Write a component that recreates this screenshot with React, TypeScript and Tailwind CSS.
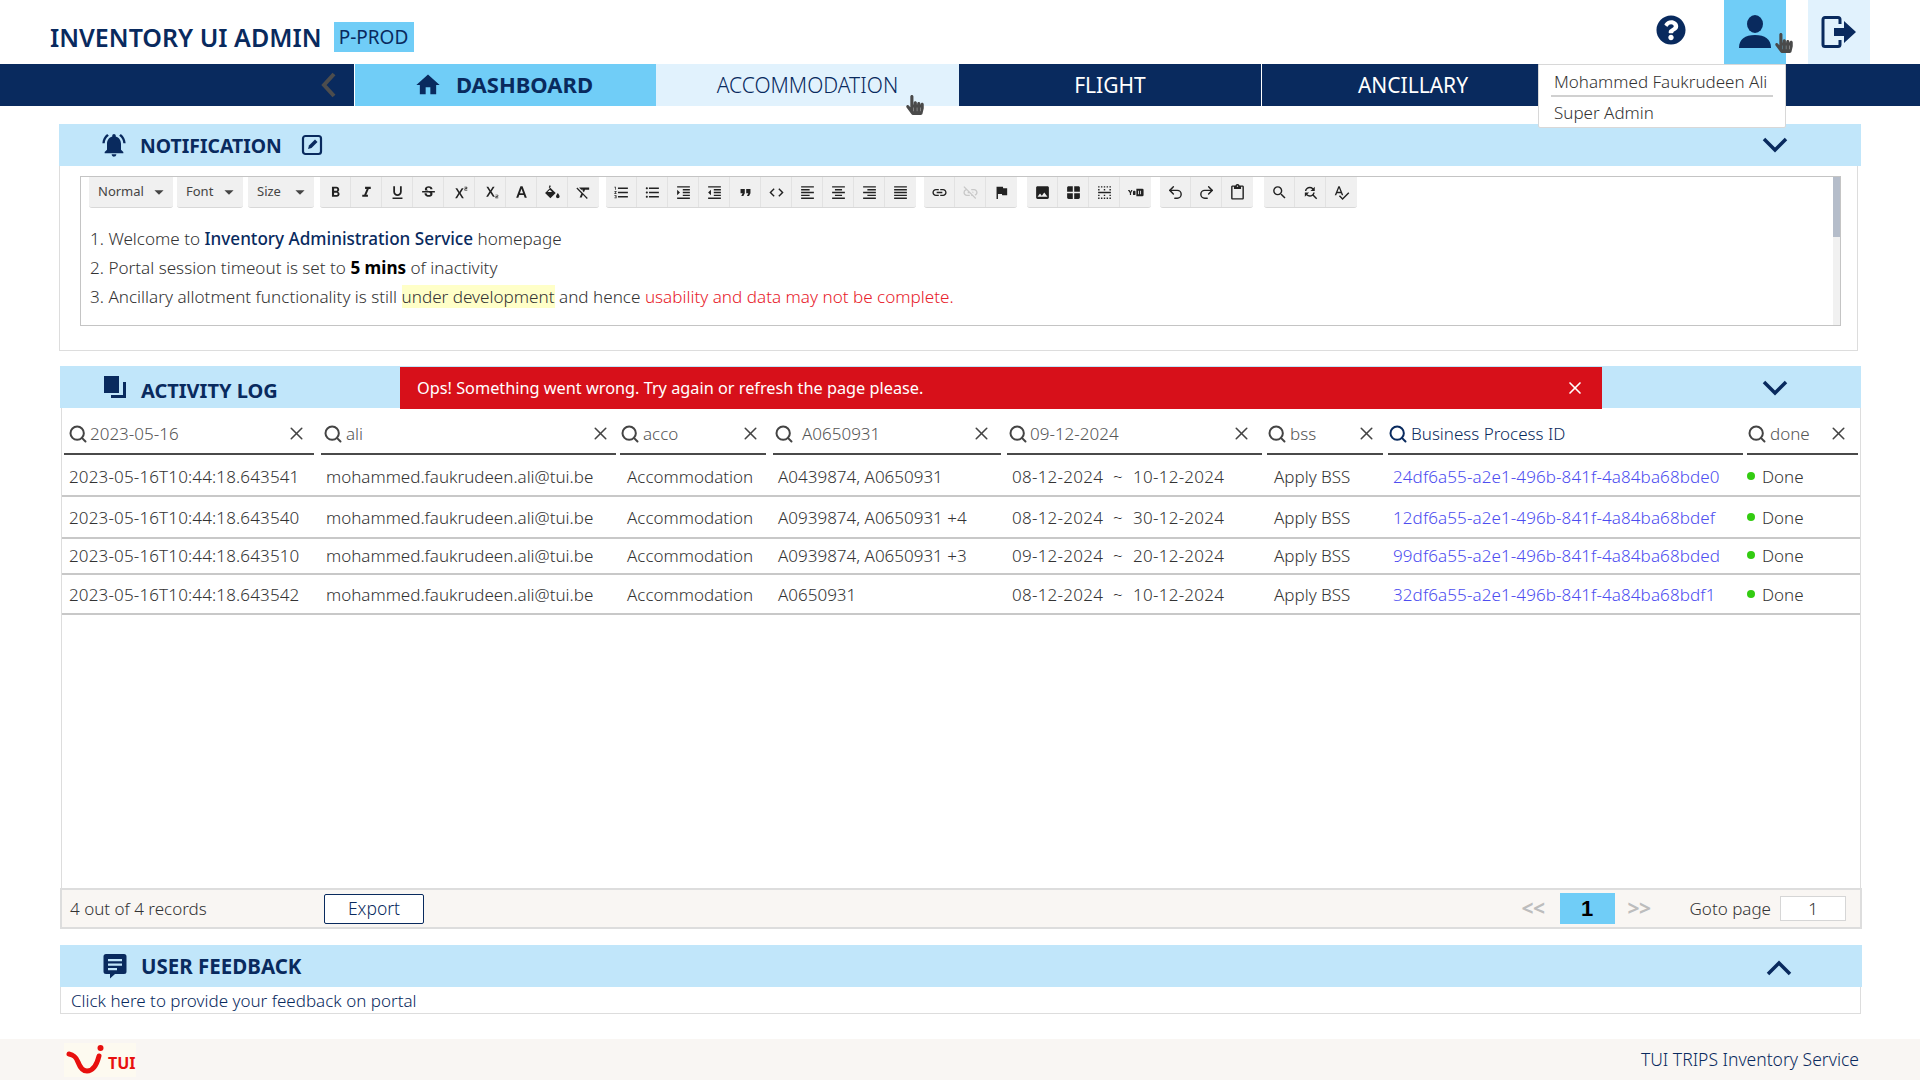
import { Search, X, Undo2, Redo2 } from "lucide-react"
import type { ReactNode } from "react"
import {
  MdCode, MdBorderHorizontal, MdContentPaste, MdFindReplace, MdFlag, MdFormatAlignCenter, MdFormatAlignJustify,
  MdFormatAlignLeft, MdFormatAlignRight, MdFormatBold, MdFormatClear, MdFormatIndentDecrease,
  MdFormatIndentIncrease, MdFormatItalic, MdFormatListBulleted, MdFormatListNumbered, MdFormatQuote,
  MdFormatUnderlined, MdHome, MdImage, MdLink, MdLinkOff, MdNotificationsActive, MdSearch,
  MdSpellcheck, MdStrikethroughS, MdSubscript, MdSuperscript, MdWindow, MdArrowDropDown,
} from "react-icons/md"
import { FaHandPointer, FaQuestionCircle } from "react-icons/fa"

const rows = [
  { h: "h-[42px] pt-[4px]", time: "2023-05-16T10:44:18.643541", codes: "A0439874, A0650931", from: "08-12-2024", to: "10-12-2024", id: "24df6a55-a2e1-496b-841f-4a84ba68bde0" },
  { h: "h-[42px] pt-[1px]", time: "2023-05-16T10:44:18.643540", codes: "A0939874, A0650931 +4", from: "08-12-2024", to: "30-12-2024", id: "12df6a55-a2e1-496b-841f-4a84ba68bdef" },
  { h: "h-[36px]", time: "2023-05-16T10:44:18.643510", codes: "A0939874, A0650931 +3", from: "09-12-2024", to: "20-12-2024", id: "99df6a55-a2e1-496b-841f-4a84ba68bded" },
  { h: "h-[40px] pt-[2px]", time: "2023-05-16T10:44:18.643542", codes: "A0650931", from: "08-12-2024", to: "10-12-2024", id: "32df6a55-a2e1-496b-841f-4a84ba68bdf1" },
]

const filters = [
  { box: "w-[257px] pr-[7px]", inner: "pl-[4px] pr-[7px] gap-[2px]", value: "2023-05-16" },
  { box: "w-[301px] pr-[6px]", inner: "pl-[2px] pr-[5px] gap-[3px]", value: "ali" },
  { box: "w-[151px] pr-[7px]", inner: "-ml-[2px] pr-[5px] gap-[3px]", value: "acco" },
  { box: "w-[234px] pr-[6px]", inner: "pl-[1px] pr-[9px] gap-[8px]", value: "A0650931" },
  { box: "w-[261px] pr-[6px]", inner: "pl-[1px] pr-[10px] gap-[2px]", value: "09-12-2024" },
  { box: "w-[120px] pr-[5px]", inner: "-ml-[1px] pr-[6px] gap-[3px]", value: "bss" },
  { box: "w-[360px] pr-[5px]", inner: "pr-[9px] gap-[3px]", value: "Business Process ID", active: true },
  { box: "w-[110px]", inner: "-ml-[1px] pr-[9px] gap-[3px]", value: "done" },
]

function FontColorIcon({ size = 16 }: { size?: number }) {
  return (
    <svg width={size} height={size} viewBox="0 0 16 16" fill="#222">
      <path fillRule="evenodd" d="M7 2h2l4 11h-2l-.9-2.700H5.900L5 13H3zm1 2.400L6.500 8.700h3z" />
    </svg>
  )
}

function FillIcon({ size = 16 }: { size?: number }) {
  return (
    <svg width={size} height={size} viewBox="0 0 16 16" fill="#222">
      <path fillRule="evenodd" d="M5.500 1l1 1-1 1 5.500 5.500-5 5L1 8.500l4.500-4.500-1-1zm0 4.400L3.400 7.500h4.200z" />
      <path d="M13 8.500c1 1.500 1.700 2.400 1.700 3.200a1.700 1.700 0 0 1-3.400 0c0-.8.700-1.700 1.700-3.200z" />
    </svg>
  )
}

function VideoIcon({ size = 16 }: { size?: number }) {
  return (
    <svg width={size} height={size} viewBox="0 0 20 20" fill="#222">
      <path d="M1 7h2l1 2 1-2h1.500L4.800 10.500V13H3.400v-2.500z" />
      <rect x="7" y="8" width="3" height="5" rx="1" />
      <path fillRule="evenodd" d="M11 5.500h7a1.500 1.500 0 0 1 1.500 1.500v6a1.500 1.500 0 0 1-1.500 1.500h-7zM13 8v4h1V8zm2.500 0v4h1V8z" />
    </svg>
  )
}

const toolbarGroups = [
  [MdFormatBold, MdFormatItalic, MdFormatUnderlined, MdStrikethroughS, MdSuperscript, MdSubscript, FontColorIcon, FillIcon, MdFormatClear],
  [MdFormatListNumbered, MdFormatListBulleted, MdFormatIndentIncrease, MdFormatIndentDecrease, MdFormatQuote, MdCode, MdFormatAlignLeft, MdFormatAlignCenter, MdFormatAlignRight, MdFormatAlignJustify],
  [MdLink, MdLinkOff, MdFlag],
  [MdImage, MdWindow, MdBorderHorizontal, VideoIcon],
  [Undo2, Redo2, MdContentPaste],
  [MdSearch, MdFindReplace, MdSpellcheck],
]

function Chevron({ up = false }: { up?: boolean }) {
  return (
    <svg width="26" height="16" viewBox="0 0 26 16" fill="none" stroke="#092a5e" strokeWidth="3.500">
      <path d={up ? "M2 14 L13 3 L24 14" : "M2 2 L13 13 L24 2"} />
    </svg>
  )
}

function SectionBar({ icon, title, titleClass, children }: { icon: ReactNode; title: string; titleClass?: string; children?: ReactNode }) {
  return (
    <div className="flex h-[42px] items-center bg-[#c1e6fa]">
      <div className="flex w-[340px] shrink-0 items-center">
        <span className="ml-[41px] flex w-[28px] justify-center">{icon}</span>
        <span className={`ml-[12px] font-bold text-[#092a5e] ${titleClass}`}>{title}</span>
      </div>
      {children}
    </div>
  )
}

function NavTab({ label, tone }: { label: string; tone: "hover" | "off" }) {
  const toneClass =
    tone === "hover"
      ? "bg-[#e1f2fd] text-[#092a5e] font-light"
      : "border-r border-white text-white font-normal"
  return <div className={`flex h-full w-[303px] items-center justify-center pt-[1px] text-[21px] ${toneClass}`}>{label}</div>
}

function Dropdown({ w, label }: { w: string; label: string }) {
  return (
    <div className={`flex h-[31px] items-center justify-between rounded-b-[3px] border-b border-[#d8d8d8] bg-[#f0f0f0] pl-[9px] pr-[3px] ${w}`}>
      <span>{label}</span>
      <MdArrowDropDown size={22} />
    </div>
  )
}

export default function App() {
  return (
    <div className="relative flex h-[1080px] w-[1920px] flex-col overflow-hidden bg-white font-['Noto_Sans',sans-serif] text-[#333]">
      {/* top bar */}
      <header className="flex h-[64px] shrink-0 items-center">
        <div className="flex items-center pt-[10px]">
          <h1 className="ml-[50px] text-[25px] font-semibold leading-none text-[#092a5e]">INVENTORY UI ADMIN</h1>
          <span className="ml-[12px] flex h-[30px] w-[80px] items-center justify-center bg-[#70cdf7] text-[19px] text-[#092a5e]">P-PROD</span>
        </div>
        <div className="ml-auto flex h-full items-center">
          <FaQuestionCircle className="mb-[4px] mr-[38px] text-[30px] text-[#092a5e]" />
          <div className="flex h-full w-[62px] items-center justify-center bg-[#70cdf7]">
            <svg width="34" height="34" viewBox="0 0 34 34" fill="#092a5e" className="-ml-[1px]">
              <ellipse cx="17" cy="9" rx="8" ry="9" />
              <path d="M1 33c0-9 6-13 16-13s16 4 16 13z" />
            </svg>
          </div>
          <div className="ml-[22px] mr-[50px] flex h-full w-[62px] items-center justify-center bg-[#e1f2fd]">
            <svg width="36" height="32" viewBox="0 0 36 32" fill="none">
              <path d="M19 8V3.500A2 2 0 0 0 17 1.500H4A2 2 0 0 0 2 3.500v25A2 2 0 0 0 4 30.500h13a2 2 0 0 0 2-2V24" stroke="#092a5e" strokeWidth="3" />
              <path d="M13 12h10V5l12 11-12 11v-7H13z" fill="#092a5e" />
            </svg>
          </div>
        </div>
      </header>

      {/* main nav */}
      <nav className="flex h-[42px] shrink-0 bg-[#092a5e]">
        <div className="flex w-[354px] items-center justify-end pr-[18px]">
          <svg width="16" height="26" viewBox="0 0 16 26" fill="none" stroke="#4d4d4d" strokeWidth="4">
            <path d="M14 2 L4 13 L14 24" />
          </svg>
        </div>
        <div className="flex h-full w-[302px] items-center justify-center gap-[14px] border-l border-white bg-[#70cdf7] pb-[1px] pr-[4px] text-[22px] font-bold text-[#092a5e]">
          <MdHome className="text-[28px]" />
          DASHBOARD
        </div>
        <NavTab label="ACCOMMODATION" tone="hover" />
        <NavTab label="FLIGHT" tone="off" />
        <NavTab label="ANCILLARY" tone="off" />
      </nav>

      {/* notification */}
      <section className="ml-[59px] mt-[18px] w-[1802px] shrink-0">
        <div className="relative">
          <SectionBar
            icon={<MdNotificationsActive className="text-[28px] text-[#092a5e]" />}
            title="NOTIFICATION"
            titleClass="text-[19.400px] pt-[2px]"
          >
            <svg width="22" height="22" viewBox="0 0 22 22" fill="none" className="absolute left-[242px]">
              <rect x="2" y="2" width="18" height="18" rx="2.500" stroke="#092a5e" strokeWidth="2.200" />
              <path d="M7 15l1-3.500 6-6 2.500 2.500-6 6z" fill="#092a5e" />
            </svg>
            <span className="ml-auto mr-[73px]"><Chevron /></span>
          </SectionBar>
        </div>
        <div className="h-[185px] w-[1799px] border-x border-b border-[#ddd] pl-[20px] pt-[10px]">
          <div className="relative h-[150px] w-[1761px] border border-[#c4c4c4]">
            <div className="flex pl-[8px] text-[13px] text-[#444]">
              <Dropdown w="w-[84px]" label="Normal" />
              <Dropdown w="w-[66px] ml-[4px]" label="Font" />
              <Dropdown w="w-[66px] ml-[5px]" label="Size" />
              <div className="ml-[6px] flex">
                {toolbarGroups.map((group, i) => (
                  <div key={i} className={`flex h-[31px] rounded-b-[3px] border-b border-[#d8d8d8] bg-[#f0f0f0] ${i === 0 ? "" : i === 1 ? "ml-[7px]" : i === 2 ? "ml-[8px]" : i === 3 ? "ml-[10px]" : i === 4 ? "ml-[9px]" : "ml-[11px]"}`}>
                    {group.map((Icon, j) => (
                      <span key={j} className={`flex w-[31px] items-center justify-center border-r border-[#e2e2e2] last:border-r-0 ${Icon === MdLinkOff ? "text-[#c8c8c8]" : "text-[#222]"}`}>
                        <Icon size={17} />
                      </span>
                    ))}
                  </div>
                ))}
              </div>
            </div>
            <div className="absolute right-0 top-0 h-full w-[7px] bg-[#f1f1f1]">
              <div className="h-[60px] bg-[#b5bdca]" />
            </div>
            <ol className="mt-[19px] flex flex-col gap-[5px] pl-[9px] text-[17.100px] font-light leading-[24px] text-[#333]">
              <li>1. Welcome to <b className="font-medium text-[#092a5e]">Inventory Administration Service</b> homepage</li>
              <li>2. Portal session timeout is set to <b className="font-bold text-black">5 mins</b> of inactivity</li>
              <li>3. Ancillary allotment functionality is still <span className="bg-[#ffffc8]">under development</span> and hence <span className="text-[#e8212b]">usability and data may not be complete.</span></li>
            </ol>
          </div>
        </div>
      </section>

      {/* activity log */}
      <section className="ml-[60px] mt-[15px] w-[1801px] shrink-0">
        <SectionBar
          icon={
            <svg width="24" height="24" viewBox="0 0 24 24" fill="#092a5e">
              <rect x="1" y="1" width="15" height="17" />
              <path d="M20 7h3v16H8v-3h12z" />
            </svg>
          }
          title="ACTIVITY LOG"
          titleClass="text-[20px] pt-[7px]"
        >
          <div className="mt-[1px] flex h-[42px] w-[1202px] shrink-0 items-center justify-between bg-[#d7101a] pl-[17px] pr-[17px] text-[16.300px] text-white">
            <span className="pt-[2px]">Ops! Something went wrong. Try again or refresh the page please.</span>
            <X size={20} strokeWidth={2} />
          </div>
          <span className="ml-auto mr-[73px] mt-[1px]"><Chevron /></span>
        </SectionBar>
        <div className="ml-[1px] h-[480px] w-[1800px] border-x border-[#ddd] pl-[2px]">
          <div className="flex h-[47px]">
            {filters.map((f) => (
              <div key={f.value} className={`shrink-0 ${f.box}`}>
                <div className={`flex h-[47px] items-center border-b-2 border-[#4a4a4a] pt-[6px] text-[17px] font-light ${f.inner} ${f.active ? "text-[#092a5e]" : "text-[#555]"}`}>
                  <Search size={20} strokeWidth={2.400} className={`shrink-0 ${f.active ? "text-[#092a5e]" : "text-[#444]"}`} />
                  <span>{f.value}</span>
                  {!f.active && <X size={21} strokeWidth={1.800} className="ml-auto text-[#444]" />}
                </div>
              </div>
            ))}
          </div>
          {rows.map((r) => (
            <div key={r.time} className={`-ml-[2px] flex w-[1798px] items-center border-b-2 border-[#c8c8c8] pl-[2px] text-[17px] font-light ${r.h}`}>
              <div className="w-[257px] shrink-0 pl-[5px] tracking-[0.15px]">{r.time}</div>
              <div className="w-[301px] shrink-0 pl-[5px]">mohammed.faukrudeen.ali@tui.be</div>
              <div className="w-[151px] shrink-0 pl-[5px]">Accommodation</div>
              <div className="w-[234px] shrink-0 pl-[5px]">{r.codes}</div>
              <div className="flex w-[261px] shrink-0 gap-[10px] pl-[5px] tracking-[0.25px]"><span>{r.from}</span><span>~</span><span>{r.to}</span></div>
              <div className="w-[120px] shrink-0 pl-[6px]">Apply BSS</div>
              <div className="w-[360px] shrink-0 pl-[5px] tracking-[0.1px] text-[#4d4df0]">{r.id}</div>
              <div className="flex items-center gap-[7px]">
                <span className="-mt-[2px] -ml-[1px] h-[8px] w-[8px] rounded-full bg-[#33cc11]" />
                Done
              </div>
            </div>
          ))}
        </div>
        <div className="flex h-[41px] w-[1802px] items-center border-2 border-[#ddd] bg-[#f9f6f3] text-[17px] font-light">
          <span className="ml-[8px] w-[254px]">4 out of 4 records</span>
          <button className="h-[30px] w-[100px] rounded-[2px] border border-[#092a5e] bg-white text-[17.500px] text-[#092a5e]">Export</button>
          <span className="ml-auto text-[21px] font-bold tracking-tight text-[#bdbdbd]">&lt;&lt;</span>
          <span className="ml-[15px] flex h-[31px] w-[55px] items-center justify-center bg-[#70cdf7] font-['Liberation_Sans',sans-serif] text-[22px] font-bold text-black">1</span>
          <span className="ml-[13px] text-[21px] font-bold tracking-tight text-[#bdbdbd]">&gt;&gt;</span>
          <span className="ml-[39px]">Goto page</span>
          <span className="ml-[9px] mr-[14px] flex h-[25px] w-[66px] items-center justify-center border border-[#d6d6d6] bg-white">1</span>
        </div>
      </section>

      {/* user feedback */}
      <section className="ml-[60px] mt-[16px] w-[1802px] shrink-0">
        <SectionBar
          icon={
            <svg width="24" height="26" viewBox="0 0 24 26" fill="#092a5e">
              <path fillRule="evenodd" d="M3 1h18a2.500 2.500 0 0 1 2.500 2.500v15a2.500 2.500 0 0 1-2.500 2.500h-9l-5 4.500V21H3A2.500 2.500 0 0 1 .5 18.500v-15A2.500 2.500 0 0 1 3 1zm2 5v2.200h14V6zm0 4.500v2.200h14v-2.200zm0 4.500v2.200h9V15z" />
            </svg>
          }
          title="USER FEEDBACK"
          titleClass="text-[20.500px]"
        >
          <span className="ml-auto mr-[70px] mt-[4px]"><Chevron up /></span>
        </SectionBar>
        <div className="flex h-[27px] w-[1801px] items-center border-x border-b border-[#ddd] pl-[10px] pt-[1px] text-[17px] font-light text-[#092a5e]">
          Click here to provide your feedback on portal
        </div>
      </section>

      {/* footer */}
      <footer className="mt-auto flex h-[41px] shrink-0 items-center bg-[#f9f6f3]">
        <div className="ml-[64px] flex h-[34px] w-[72px] items-center bg-[#fdfaf0]">
          <svg width="38" height="32" viewBox="0 0 38 32" fill="none" className="ml-[2px]">
            <path d="M3 10c5 1 7 3 9 8 1.500 4 4 9 9 9 6 0 10-7 12-15" stroke="#e8100f" strokeWidth="5" strokeLinecap="round" />
            <circle cx="34.500" cy="4" r="3" fill="#e8100f" />
          </svg>
          <span className="ml-[4px] mt-[6px] text-[16px] font-bold leading-none text-[#e8100f]">TUI</span>
        </div>
        <span className="ml-auto mr-[61px] text-[17.500px] font-light text-[#092a5e]">TUI TRIPS Inventory Service</span>
      </footer>

      {/* user menu */}
      <div className="absolute left-[1538px] top-[64px] h-[64px] w-[248px] rounded-b-[2px] border border-[#d8d8d8] bg-white text-[17px] font-light text-[#333]">
        <div className="mx-[12px] flex h-[32px] items-center border-b-2 border-[#d0d0d0] px-[3px] pt-[4px] whitespace-nowrap">Mohammed Faukrudeen Ali</div>
        <div className="flex h-[31px] items-center px-[15px] pt-[1px]">Super Admin</div>
      </div>

      {/* mouse cursors caught in the shot */}
      <FaHandPointer className="absolute left-[905px] top-[95px] text-[20px] text-[#4a4a4a]" />
      <FaHandPointer className="absolute left-[1774px] top-[33px] text-[20px] text-[#4a4a4a]" />
    </div>
  )
}
